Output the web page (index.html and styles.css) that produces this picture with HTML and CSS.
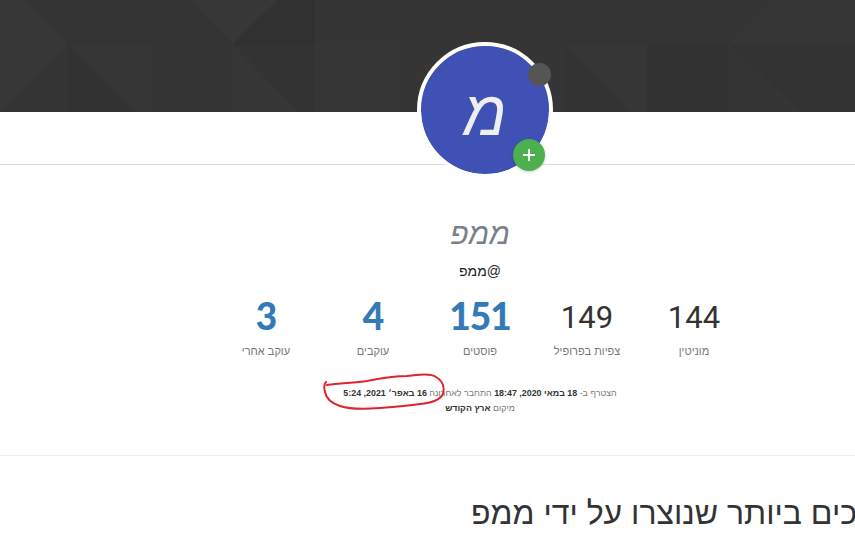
FILE: index.html
```html
<!DOCTYPE html>
<html lang="he" dir="rtl">
<head>
    <meta charset="UTF-8">
    <meta name="viewport" content="width=device-width, initial-scale=1.0">
    <title>ממפ</title>
    <link rel="stylesheet" href="styles.css">
</head>
<body>
<div class="page">
    <div class="cover">
        <svg class="cover-pattern" width="960" height="112" viewBox="0 0 960 112">
            <rect width="960" height="112" fill="#353535"/>
            <polygon points="0,0 25,0 68,44 0,112" fill="#373737"/>
            <polygon points="25,0 190,0 233,44 68,44" fill="#343434"/>
            <polygon points="68,44 135,112 68,112" fill="#323232"/>
            <polygon points="68,44 152,44 152,112 135,112" fill="#363636"/>
            <polygon points="152,44 233,44 165,112 152,112" fill="#343434"/>
            <polygon points="190,0 278,0 233,44" fill="#373737"/>
            <polygon points="278,0 315,0 315,44 233,44" fill="#313131"/>
            <polygon points="233,44 300,112 233,112" fill="#363636"/>
            <polygon points="233,44 315,44 315,112 300,112" fill="#333333"/>
            <polygon points="315,0 397,0 397,44 315,44" fill="#353535"/>
            <polygon points="315,44 397,44 397,112 315,112" fill="#363636"/>
            <polygon points="397,0 608,0 563,44 397,44" fill="#353535"/>
            <polygon points="608,0 772,0 728,44 563,44" fill="#343434"/>
            <polygon points="563,44 630,112 563,112" fill="#333333"/>
            <polygon points="563,44 647,44 647,112 630,112" fill="#363636"/>
            <polygon points="647,44 728,44 728,112 647,112" fill="#323232"/>
            <polygon points="728,44 960,44 960,112 728,112" fill="#333333"/>
            <polygon points="728,44 800,112 728,112" fill="#353535"/>
            <polygon points="772,0 960,0 960,44 728,44" fill="#363636"/>
        </svg>
    </div>

    <div class="subnav"></div>

    <div class="avatar">
        <span class="avatar-letter">מ</span>
        <span class="status-dot"></span>
        <span class="follow-btn">
            <svg width="16" height="16" viewBox="0 0 16 16"><path d="M8 2v12M2 8h12" stroke="#fff" stroke-width="1.8"/></svg>
        </span>
    </div>

    <section class="profile">
        <h1 class="profile-name">ממפ</h1>
        <div class="profile-handle">@ממפ</div>

        <div class="stats">
            <div class="stat">
                <div class="stat-value">144</div>
                <div class="stat-label">מוניטין</div>
            </div>
            <div class="stat">
                <div class="stat-value">149</div>
                <div class="stat-label">צפיות בפרופיל</div>
            </div>
            <div class="stat">
                <div class="stat-value stat-link">151</div>
                <div class="stat-label">פוסטים</div>
            </div>
            <div class="stat">
                <div class="stat-value stat-link">4</div>
                <div class="stat-label">עוקבים</div>
            </div>
            <div class="stat">
                <div class="stat-value stat-link">3</div>
                <div class="stat-label">עוקב אחרי</div>
            </div>
        </div>

        <div class="meta">
            <div>הצטרף ב- <b>18 במאי 2020, 18:47</b> התחבר לאחרונה <b>16 באפר׳ 2021, 5:24</b></div>
            <div>מיקום <b>ארץ הקודש</b></div>
        </div>

        <svg class="scribble" width="130" height="44" viewBox="320 370 130 44">
            <path d="M327 385 C340 383 355 383 367 381 C382 378 395 376 407 376 C420 374 431 373 436 377 C443 381 445 388 443 394 C440 400 431 403 420 404 C408 406 395 407 380 408 C368 409 352 410 340 406 C331 403 326 398 325 392 C324 388 324 384 326 382" fill="none" stroke="#e0242c" stroke-width="2" stroke-linecap="round"/>
        </svg>
    </section>

    <div class="section-head">
        <h2 class="section-title">הנושאים הארוכים ביותר שנוצרו על ידי ממפ</h2>
    </div>
</div>
</body>
</html>
```

FILE: styles.css
```css
* {
    box-sizing: border-box;
}

html,
body {
    margin: 0;
    padding: 0;
    height: 537px;
    overflow: hidden;
    background-color: #fff;
}

body {
    font-family: "Liberation Sans", Arial, sans-serif;
    color: #333;
}

.page {
    position: relative;
    width: 960px;
    margin-right: -105px;
}

.cover {
    height: 112px;
    background-color: #353535;
}

.cover-pattern {
    display: block;
}

.subnav {
    height: 53px;
    border-bottom: 1px solid #ddd;
}

.avatar {
    position: absolute;
    top: 42px;
    left: 417px;
    width: 136px;
    height: 136px;
    border: 4px solid #fff;
    border-radius: 50%;
    background-color: #3f51b5;
    background-clip: padding-box;
    display: flex;
    align-items: center;
    justify-content: center;
}

.avatar-letter {
    font-size: 63px;
    font-style: italic;
    line-height: 1;
    color: #eee;
    margin-top: 6px;
}

.status-dot {
    position: absolute;
    top: 17px;
    right: -2px;
    width: 23px;
    height: 23px;
    border-radius: 50%;
    background-color: #555;
}

.follow-btn {
    position: absolute;
    bottom: 3px;
    right: 4px;
    width: 32px;
    height: 32px;
    border-radius: 50%;
    background-color: #4caf50;
    box-shadow: 0 1px 3px rgba(0, 0, 0, 0.2);
    display: flex;
    align-items: center;
    justify-content: center;
}

.profile {
    position: relative;
    height: 291px;
    padding-top: 49px;
    border-bottom: 1px solid #eee;
    text-align: center;
}

.profile-name {
    margin: 0;
    font-size: 30px;
    font-style: italic;
    line-height: 40px;
    font-weight: 400;
    color: #78818a;
}

.profile-handle {
    margin-top: 7px;
    font-size: 14px;
    line-height: 20px;
    color: #222;
}

.stats {
    display: flex;
    justify-content: center;
    margin-top: 12px;
}

.stat {
    width: 107px;
}

.stat-value {
    height: 44px;
    font-size: 31px;
    line-height: 50px;
    font-family: Roboto, sans-serif;
    color: #333;
}

.stat-link {
    font-family: Lato, sans-serif;
    font-size: 37px;
    font-weight: 900;
    line-height: 46px;
    letter-spacing: -1px;
    color: #337ab7;
}

.stat-label {
    margin-top: 6px;
    font-size: 11px;
    line-height: 16px;
    color: #777;
}

.meta {
    margin-top: 27px;
    font-size: 8.9px;
    line-height: 15px;
    color: #777;
}

.meta b {
    color: #333;
}

.scribble {
    position: absolute;
    top: 205px;
    left: 320px;
}

.section-head {
    direction: ltr;
    margin-top: 37px;
    padding-left: 471px;
    white-space: nowrap;
}

.section-title {
    display: inline-block;
    direction: rtl;
    margin: 0;
    font-size: 32px;
    line-height: 40px;
    font-weight: 400;
    color: #333;
}
```
